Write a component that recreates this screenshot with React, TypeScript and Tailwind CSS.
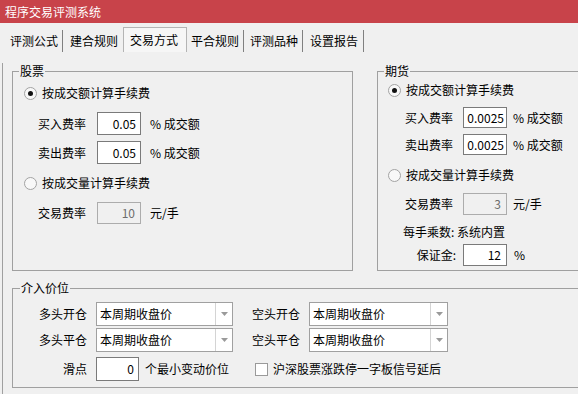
import React from "react";

const Radio = ({ checked }: { checked?: boolean }) => (
  <span className="flex h-[13px] w-[13px] shrink-0 items-center justify-center rounded-full border border-[#a3a3a3] bg-[#f8f8f8]">
    {checked && <span className="h-[5px] w-[5px] rounded-full bg-[#111]" />}
  </span>
);

const Combo = ({ wide }: { wide?: boolean }) => (
  <div
    className={
      wide
        ? "flex h-[24px] w-[139px] items-stretch border border-[#a0a0a0] bg-white"
        : "flex h-[24px] w-[137px] items-stretch border border-[#a0a0a0] bg-white"
    }
  >
    <span className="flex flex-1 items-center pl-[3px]">本周期收盘价</span>
    <span className="flex w-[17px] items-center justify-center border-l border-[#d4d4d4]">
      <svg width="7" height="4" viewBox="0 0 7 4">
        <polygon points="0,0 7,0 3.5,4" fill="#9a9a9a" />
      </svg>
    </span>
  </div>
);

export default function App() {
  return (
    <div className="h-[394px] w-[578px] overflow-hidden bg-[#f0f0f0] font-['Noto_Sans_CJK_SC',sans-serif] text-[12px] leading-[16px] text-black">
      {/* title */}
      <div className="flex h-[23px] items-center bg-[#c8434a] pl-[5px] text-white">程序交易评测系统</div>

      {/* tabs */}
      <div className="flex h-[29px] items-end pl-[2px]">
        <span className="flex h-[22px] w-[61px] items-center border-r border-[#808080] pl-[8px]">评测公式</span>
        <span className="flex h-[22px] w-[60px] items-center pl-[7px]">建合规则</span>
        <span className="flex h-[25px] w-[64px] items-center border-x border-t border-[#b4b4b4] bg-[#f6f6f6] pl-[6px]">交易方式</span>
        <span className="flex h-[22px] w-[57px] items-center border-r border-[#808080] pl-[4px]">平合规则</span>
        <span className="flex h-[22px] w-[59px] items-center border-r border-[#808080] pl-[6px]">评测品种</span>
        <span className="flex h-[22px] w-[61px] items-center border-r border-[#808080] pl-[7px]">设置报告</span>
      </div>

      <div className="ml-[2px] h-[342px] border-l border-[#a0a0a0] pl-[9px]">
        <div className="mt-[11px] flex gap-[24px]">
          {/* 股票 */}
          <fieldset className="h-[208px] w-[341px] shrink-0 border border-[#a0a0a0]">
            <legend className="ml-[6px] px-[1px]">股票</legend>
            <div className="mt-[6px] flex h-[16px] items-center gap-[5px] pl-[11px]">
              <Radio checked />
              <span>按成交额计算手续费</span>
            </div>
            <div className="mt-[11px] flex h-[23px] items-center pl-[25px]">
              <span className="w-[59px]">买入费率</span>
              <span className="flex h-[23px] w-[44px] items-center justify-end border border-[#7a7a7a] bg-white pr-[4px]">0.05</span>
              <span className="ml-[9px]">% 成交额</span>
            </div>
            <div className="mt-[6px] flex h-[23px] items-center pl-[25px]">
              <span className="w-[59px]">卖出费率</span>
              <span className="flex h-[23px] w-[44px] items-center justify-end border border-[#7a7a7a] bg-white pr-[4px]">0.05</span>
              <span className="ml-[9px]">% 成交额</span>
            </div>
            <div className="mt-[11px] flex h-[16px] items-center gap-[5px] pl-[11px]">
              <Radio />
              <span>按成交量计算手续费</span>
            </div>
            <div className="mt-[11px] flex h-[22px] items-center pl-[25px]">
              <span className="w-[59px]">交易费率</span>
              <span className="flex h-[22px] w-[44px] items-center justify-end border border-[#acacac] pr-[5px] text-[#6d6d6d]">10</span>
              <span className="ml-[9px]">元/手</span>
            </div>
          </fieldset>

          {/* 期货 */}
          <fieldset className="h-[208px] w-[214px] shrink-0 border border-[#a0a0a0]">
            <legend className="ml-[6px] px-[1px]">期货</legend>
            <div className="mt-[3px] flex h-[16px] items-center gap-[5px] pl-[10px]">
              <Radio checked />
              <span>按成交额计算手续费</span>
            </div>
            <div className="mt-[9px] flex h-[21px] items-center pl-[27px]">
              <span className="w-[58px]">买入费率</span>
              <span className="flex h-[21px] w-[44px] items-center justify-end border border-[#7a7a7a] bg-white pr-[2px]">0.0025</span>
              <span className="ml-[6px]">% 成交额</span>
            </div>
            <div className="mt-[6px] flex h-[21px] items-center pl-[27px]">
              <span className="w-[58px]">卖出费率</span>
              <span className="flex h-[21px] w-[44px] items-center justify-end border border-[#7a7a7a] bg-white pr-[2px]">0.0025</span>
              <span className="ml-[6px]">% 成交额</span>
            </div>
            <div className="mt-[12px] flex h-[16px] items-center gap-[5px] pl-[10px]">
              <Radio />
              <span>按成交量计算手续费</span>
            </div>
            <div className="mt-[10px] flex h-[22px] items-center pl-[27px]">
              <span className="w-[58px]">交易费率</span>
              <span className="flex h-[22px] w-[44px] items-center justify-end border border-[#acacac] pr-[5px] text-[#6d6d6d]">3</span>
              <span className="ml-[6px]">元/手</span>
            </div>
            <div className="mt-[9px] flex h-[16px] items-center pl-[25px]">每手乘数: 系统内置</div>
            <div className="mt-[4px] flex h-[22px] items-center pl-[27px]">
              <span className="w-[58px] pr-[7px] text-right">保证金:</span>
              <span className="flex h-[22px] w-[44px] items-center justify-end border border-[#7a7a7a] bg-white pr-[5px]">12</span>
              <span className="ml-[7px]">%</span>
            </div>
          </fieldset>
        </div>

        {/* 介入价位 */}
        <fieldset className="mt-[9px] h-[108px] w-[580px] border border-[#a0a0a0]">
          <legend className="ml-[7px] px-[1px]">介入价位</legend>
          <div className="mt-[6px] flex h-[24px] items-center">
            <span className="w-[83px] pr-[9px] text-right">多头开仓</span>
            <Combo />
            <span className="ml-[19px] w-[57px]">空头开仓</span>
            <Combo wide />
          </div>
          <div className="mt-[2px] flex h-[24px] items-center">
            <span className="w-[83px] pr-[9px] text-right">多头平仓</span>
            <Combo />
            <span className="ml-[19px] w-[57px]">空头平仓</span>
            <Combo wide />
          </div>
          <div className="mt-[5px] flex h-[24px] items-center">
            <span className="w-[83px] pr-[9px] text-right">滑点</span>
            <span className="flex h-[24px] w-[43px] items-center justify-end border border-[#7a7a7a] bg-white pr-[4px]">0</span>
            <span className="ml-[6px]">个最小变动价位</span>
            <span className="ml-[26px] h-[13px] w-[13px] border border-[#9a9a9a] bg-white" />
            <span className="ml-[5px]">沪深股票涨跌停一字板信号延后</span>
          </div>
        </fieldset>
      </div>
    </div>
  );
}
